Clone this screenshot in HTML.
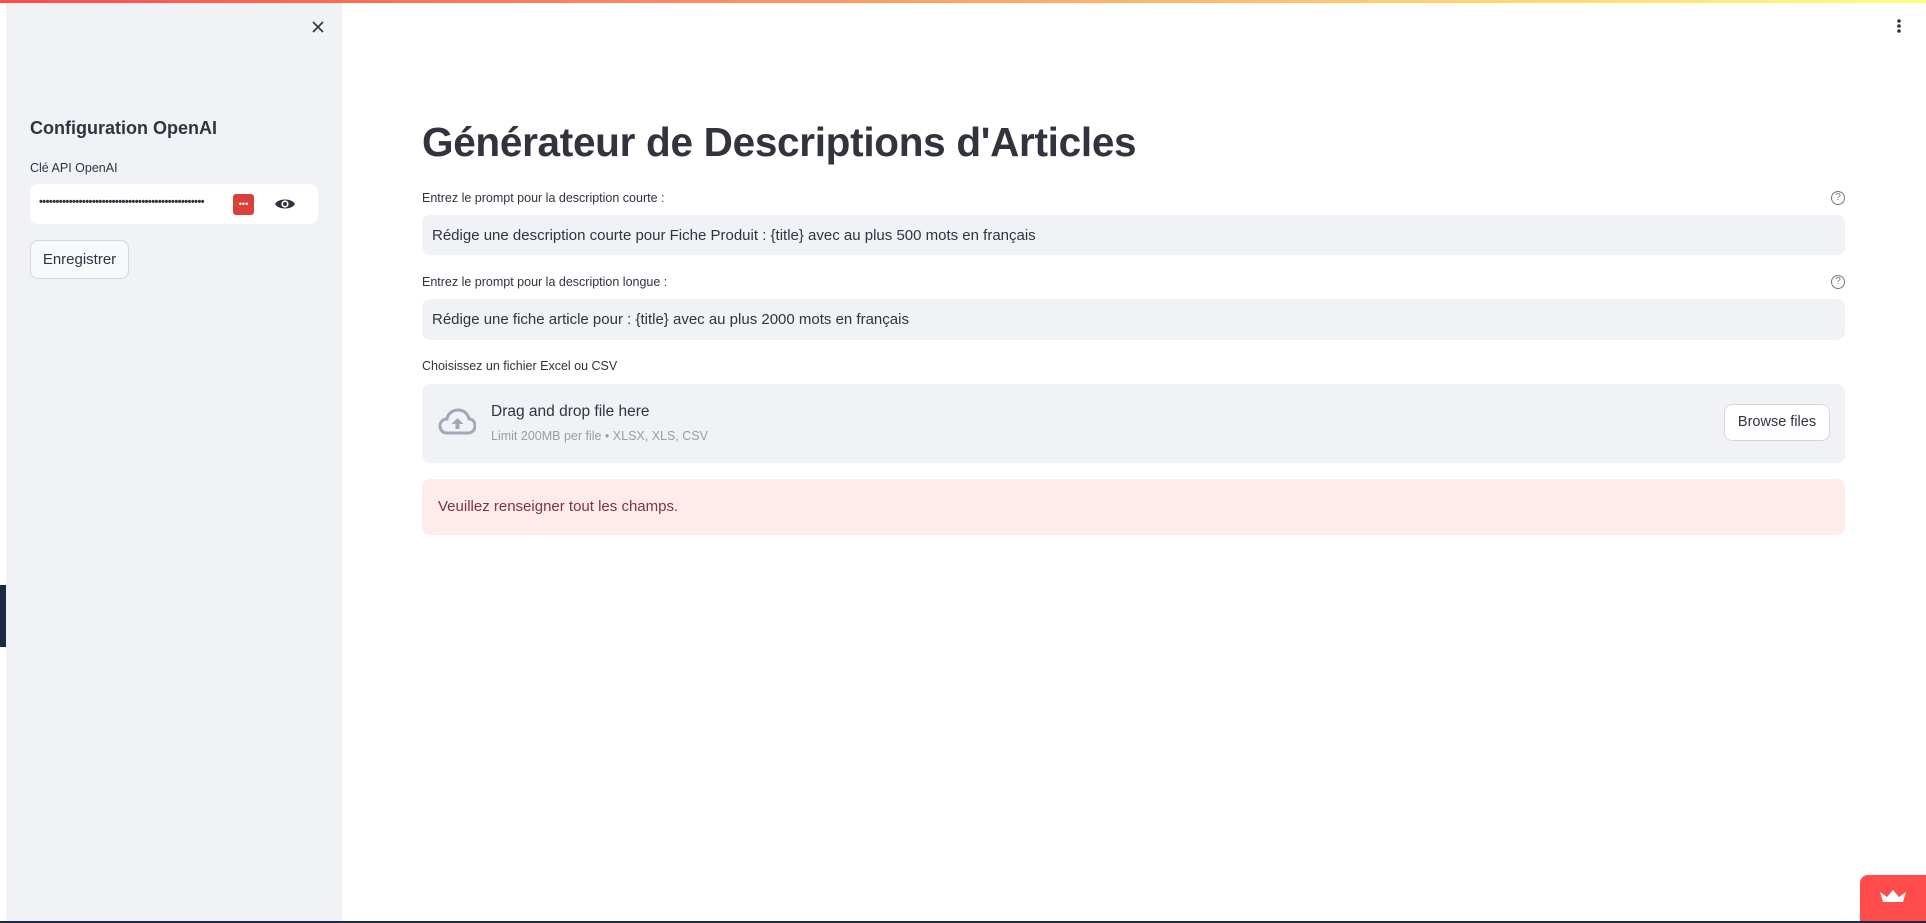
<!DOCTYPE html>
<html><head><meta charset="utf-8"><style>
*{box-sizing:border-box;margin:0;padding:0}
body{width:1926px;height:923px;overflow:hidden;background:#fff;font-family:"Liberation Sans",sans-serif;color:#31333f;position:relative}
.top{position:absolute;left:0;top:0;width:1926px;height:3px;background:linear-gradient(90deg,#ff4b4b,#fffd80)}
.side{position:absolute;left:6px;top:3px;width:336px;height:918px;background:#f0f2f6}
.abs{position:absolute}
.inp{background:#f0f2f6;border-radius:8px;font-size:15px;padding-left:10px;display:flex;align-items:center}
.lbl{font-size:12.5px}
.q{position:absolute;width:14px;height:14px;border:1.3px solid #777;border-radius:50%;font-size:10px;text-align:center;line-height:12px;color:#777}
</style></head><body>
<div class="top"></div>
<div class="side"></div>
<div class="abs" style="left:0;top:585px;width:6px;height:62px;background:#1e2a44"></div>
<svg class="abs" style="left:311px;top:20px" width="14" height="14"><path d="M2 2L12 12M12 2L2 12" stroke="#31333f" stroke-width="1.6"/></svg>
<div class="abs" style="left:30px;top:118px;font-size:18px;font-weight:bold;color:#31333f">Configuration OpenAI</div>
<div class="abs lbl" style="left:30px;top:161px">Clé API OpenAI</div>
<div class="abs" style="left:30px;top:184px;width:288px;height:40px;background:#fff;border-radius:8px"></div>
<div class="abs" style="left:39px;top:196px;font-size:11px;letter-spacing:-0.55px;font-weight:bold;white-space:nowrap">••••••••••••••••••••••••••••••••••••••••••••••••••</div>
<div class="abs" style="left:233px;top:194px;width:21px;height:21px;background:#d93f3b;border-radius:3px;color:#fff;font-size:9px;text-align:center;line-height:20px">•••</div>
<svg class="abs" style="left:274px;top:196px" width="22" height="16" viewBox="0 0 22 16"><path d="M1 8C4 2 18 2 21 8C18 14 4 14 1 8Z" fill="#31333f"/><circle cx="11" cy="8" r="3.6" fill="#fff"/><circle cx="11" cy="8" r="2" fill="#31333f"/></svg>
<div class="abs" style="left:30px;top:240px;width:99px;height:39px;border:1px solid #d6d6d9;border-radius:8px;background:#f8f9fb;font-size:15px;text-align:center;line-height:37px">Enregistrer</div>
<svg class="abs" style="left:1896px;top:18px" width="6" height="16"><circle cx="3" cy="3" r="1.8" fill="#31333f"/><circle cx="3" cy="8" r="1.8" fill="#31333f"/><circle cx="3" cy="13" r="1.8" fill="#31333f"/></svg>
<div class="abs" style="left:422px;top:119px;font-size:40.5px;font-weight:bold;color:#31333f;letter-spacing:-0.3px">Générateur de Descriptions d'Articles</div>
<div class="abs lbl" style="left:422px;top:191px">Entrez le prompt pour la description courte :</div>
<div class="q" style="left:1831px;top:191px">?</div>
<div class="abs inp" style="left:422px;top:215px;width:1423px;height:40px">Rédige une description courte pour Fiche Produit : {title} avec au plus 500 mots en français</div>
<div class="abs lbl" style="left:422px;top:275px">Entrez le prompt pour la description longue :</div>
<div class="q" style="left:1831px;top:275px">?</div>
<div class="abs inp" style="left:422px;top:299px;width:1423px;height:41px">Rédige une fiche article pour : {title} avec au plus 2000 mots en français</div>
<div class="abs lbl" style="left:422px;top:359px">Choisissez un fichier Excel ou CSV</div>
<div class="abs" style="left:422px;top:384px;width:1423px;height:79px;background:#f0f2f6;border-radius:8px"></div>
<svg class="abs" style="left:438px;top:408px" width="38" height="28" viewBox="0 0 38 28"><path d="M9 25C4 25 2 21 2 18C2 14 5 11 9 11C10 5 15 2 20 2C26 2 30 6 31 11C35 11 37 14 37 18C37 22 34 25 30 25Z" fill="none" stroke="#a3a8b8" stroke-width="3"/><path d="M19.5 10L13.5 16H17.5V21H21.5V16H25.5Z" fill="#a3a8b8"/></svg>
<div class="abs" style="left:491px;top:403px;font-size:15.5px">Drag and drop file here</div>
<div class="abs" style="left:491px;top:429px;font-size:12.5px;color:#9a9ca6">Limit 200MB per file • XLSX, XLS, CSV</div>
<div class="abs" style="left:1724px;top:404px;width:106px;height:37px;background:#fff;border:1px solid #d6d6d9;border-radius:8px;font-size:14.5px;text-align:center;line-height:35px">Browse files</div>
<div class="abs" style="left:422px;top:479px;width:1423px;height:56px;background:#ffebeb;border-radius:8px;color:#7d353b;font-size:15px;padding-left:16px;line-height:56px">Veuillez renseigner tout les champs.</div>
<div class="abs" style="left:1860px;top:875px;width:66px;height:46px;background:#ff4b4b;border-radius:8px 0 0 0"></div>
<svg class="abs" style="left:1879px;top:889px" width="28" height="14"><path d="M1 3L8 8L14 1L20 8L27 3L24 13H4Z" fill="#fff"/></svg>
<div class="abs" style="left:0;top:921px;width:1926px;height:2px;background:#1e2a44"></div>
</body></html>
